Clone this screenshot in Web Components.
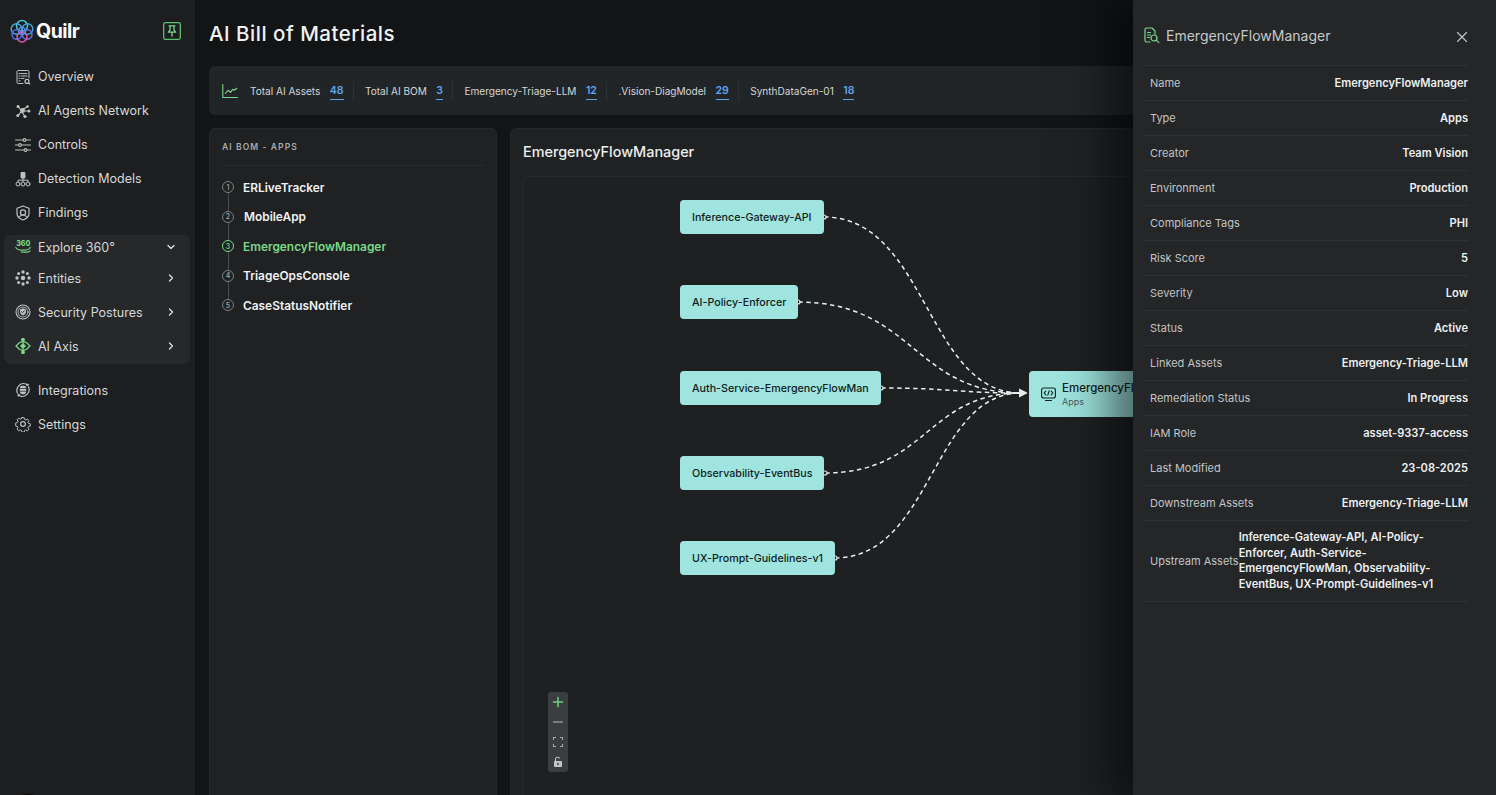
<!DOCTYPE html>
<html lang="en"><head><meta charset="utf-8"><title>AI Bill of Materials</title>
<style>
html,body{margin:0;height:795px;overflow:hidden;background:#121416;font-family:Inter,"Liberation Sans",sans-serif;color:#e6e8e8}
q-app{height:795px}
</style></head><body>
<q-app>
  <q-sidebar>
    <q-nav-item label="Overview" icon="overview"></q-nav-item>
    <q-nav-item label="AI Agents Network" icon="agents"></q-nav-item>
    <q-nav-item label="Controls" icon="controls"></q-nav-item>
    <q-nav-item label="Detection Models" icon="models"></q-nav-item>
    <q-nav-item label="Findings" icon="findings"></q-nav-item>
    <q-nav-group>
      <q-nav-item label="Explore 360°" icon="explore" chevron="down" short></q-nav-item>
      <q-nav-item label="Entities" icon="entities" chevron="right"></q-nav-item>
      <q-nav-item label="Security Postures" icon="security" chevron="right"></q-nav-item>
      <q-nav-item label="AI Axis" icon="axis" chevron="right"></q-nav-item>
    </q-nav-group>
    <q-nav-item label="Integrations" icon="integrations"></q-nav-item>
    <q-nav-item label="Settings" icon="settings"></q-nav-item>
  </q-sidebar>
  <q-main>
    <q-stat-bar>
      <q-stat label="Total AI Assets" value="48"></q-stat>
      <q-stat label="Total AI BOM" value="3"></q-stat>
      <q-stat label="Emergency-Triage-LLM" value="12"></q-stat>
      <q-stat label=".Vision-DiagModel" value="29"></q-stat>
      <q-stat label="SynthDataGen-01" value="18" last></q-stat>
    </q-stat-bar>
    <q-bom-list slot="left">
      <q-bom-item n="1">ERLiveTracker</q-bom-item>
      <q-bom-item n="2" nudge>MobileApp</q-bom-item>
      <q-bom-item n="3" active>EmergencyFlowManager</q-bom-item>
      <q-bom-item n="4">TriageOpsConsole</q-bom-item>
      <q-bom-item n="5" last>CaseStatusNotifier</q-bom-item>
    </q-bom-list>
    <q-flow slot="right" heading="EmergencyFlowManager">
      <q-flow-node x="680" y="200">Inference-Gateway-API</q-flow-node>
      <q-flow-node x="680" y="285">AI-Policy-Enforcer</q-flow-node>
      <q-flow-node x="680" y="371">Auth-Service-EmergencyFlowMan</q-flow-node>
      <q-flow-node x="680" y="456">Observability-EventBus</q-flow-node>
      <q-flow-node x="680" y="541">UX-Prompt-Guidelines-v1</q-flow-node>
      <q-flow-target x="1029" y="371" name="EmergencyFlowManager" kind="Apps"></q-flow-target>
    </q-flow>
  </q-main>
  <q-detail-panel heading="EmergencyFlowManager">
    <q-detail-row label="Name">EmergencyFlowManager</q-detail-row>
    <q-detail-row label="Type">Apps</q-detail-row>
    <q-detail-row label="Creator">Team Vision</q-detail-row>
    <q-detail-row label="Environment">Production</q-detail-row>
    <q-detail-row label="Compliance Tags">PHI</q-detail-row>
    <q-detail-row label="Risk Score">5</q-detail-row>
    <q-detail-row label="Severity">Low</q-detail-row>
    <q-detail-row label="Status">Active</q-detail-row>
    <q-detail-row label="Linked Assets">Emergency-Triage-LLM</q-detail-row>
    <q-detail-row label="Remediation Status">In Progress</q-detail-row>
    <q-detail-row label="IAM Role">asset-9337-access</q-detail-row>
    <q-detail-row label="Last Modified">23-08-2025</q-detail-row>
    <q-detail-row label="Downstream Assets">Emergency-Triage-LLM</q-detail-row>
    <q-detail-row label="Upstream Assets" multi>Inference-Gateway-API, AI-Policy-Enforcer, Auth-Service-EmergencyFlowMan, Observability-EventBus, UX-Prompt-Guidelines-v1</q-detail-row>
  </q-detail-panel>
</q-app>
<script>
const G='#7bd88a', S='#bfc2c2';
const svg=(b,w=16,h=16,vb='0 0 16 16')=>`<svg width="${w}" height="${h}" viewBox="${vb}" fill="none" stroke="${S}" stroke-width="1" stroke-linecap="round" stroke-linejoin="round">${b}</svg>`;
const ICONS={
overview:svg(`<path d="M8 14.5H3.2a1.2 1.2 0 0 1-1.2-1.2V2.7a1.2 1.2 0 0 1 1.2-1.2h9.6A1.2 1.2 0 0 1 14 2.7V9"/><path d="M4 4.6h8M4 7h1M6.5 7h5.5M4 9.4h1M6.5 9.4h2.5M4 11.8h1"/><circle cx="12" cy="12.4" r="2" stroke-width="1.2"/><path d="M13.5 13.9l1.3 1.2" stroke-width="1.2"/>`),
agents:svg(`<path d="M3 3l3.5 5L3 13M6.5 8h6M8 5.5l-1.5 2.5L9.5 13M12.5 3.5L9 6" stroke-width="1.2"/><g fill="${S}" stroke="none"><circle cx="7.500" cy="7.500" r="2.400"/><circle cx="3" cy="3.500" r="1.500"/><circle cx="2.800" cy="12.500" r="1.500"/><circle cx="12.500" cy="3.500" r="1.300"/><circle cx="14" cy="8" r="1.500"/><circle cx="10" cy="13.500" r="1.600"/></g>`),
controls:svg(`<path d="M.5 3h15M.5 8h15M.5 13h15" stroke-width="1.100"/><g fill="#1c1e1f" stroke-width="1.100"><circle cx="9.500" cy="3" r="1.400"/><circle cx="5" cy="8" r="1.400"/><circle cx="10.500" cy="13" r="1.400"/></g>`),
models:svg(`<rect x="5.600" y="1" width="4.800" height="6.400" rx="1" fill="${S}" stroke="none"/><path d="M8 7.500v3M3 11V9.200h10V11"/><circle cx="3" cy="13" r="2"/><circle cx="8" cy="13" r="2"/><circle cx="13" cy="13" r="2"/>`),
findings:svg(`<path d="M8 1l6 2.200v5c0 3.200-2.600 5.600-6 6.800-3.400-1.200-6-3.600-6-6.800v-5z" stroke-width="1.200"/><circle cx="8" cy="7.500" r="2.600" stroke-width="1.200"/><path d="M4.700 11.600c.8-1.200 2-1.600 3.300-1.600s2.500.4 3.300 1.600" stroke-width="1.200"/>`),
explore:`<svg width="16" height="16" viewBox="0 0 16 16" fill="none"><text x="1.200" y="6.600" font-family="Inter,'Liberation Sans',sans-serif" font-size="7" font-weight="800" fill="${G}" stroke="none">360</text><path d="M.8 8.400c.4 1.800 3.400 2.700 7.200 2.700s6.800-.9 7.200-2.700M8.500 13.100H12c1.500 0 2.600-.5 3.200-1.200" stroke="${G}" stroke-width="1.100" stroke-linecap="round"/><path d="M7.500 11.500l-2 1.400 2 1.400z" fill="${G}"/></svg>`,
entities:svg(`<g fill="${S}" stroke="none"><circle cx="8" cy="8" r="2.200"/><circle cx="8" cy="2" r="1.700"/><circle cx="8" cy="14" r="1.700"/><circle cx="2" cy="8" r="1.700"/><circle cx="14" cy="8" r="1.700"/><circle cx="3.600" cy="3.600" r="1.500"/><circle cx="12.400" cy="3.600" r="1.500"/><circle cx="3.600" cy="12.400" r="1.500"/><circle cx="12.400" cy="12.400" r="1.500"/></g>`),
security:svg(`<circle cx="8" cy="8" r="7" stroke-width="1.100"/><circle cx="8" cy="8" r="5" stroke-width=".9"/><path d="M8 4.300l3 1.100v2.400c0 1.700-1.300 3-3 3.700-1.700-.7-3-2-3-3.700V5.400z" fill="${S}" stroke="none"/><path d="M6.600 7.700l1 1 1.800-1.900" stroke="#262829"/>`),
axis:`<svg width="16" height="16" viewBox="0 0 16 16" fill="none" stroke="${G}" stroke-width="1.200" stroke-linecap="round" stroke-linejoin="round"><path d="M4.400 4.800L1 8l3.400 3.200M11.600 4.800L15 8l-3.400 3.200M5 4.500c1.800-1 4.200-1 6 0M5 11.500c1.800 1 4.200 1 6 0"/><path d="M8 2.500V13.500"/><circle cx="8" cy="1.700" r="1.300" fill="${G}"/><circle cx="8" cy="14.300" r="1.300" fill="${G}"/><path d="M5.800 8L8 5.800 10.200 8 8 10.200z" fill="${G}"/></svg>`,
integrations:svg(`<path d="M2.500 11.200A6.800 6.800 0 0 1 11 2M13.500 4.800A6.800 6.800 0 0 1 5 14" stroke-width="1.200"/><rect x="4.800" y="3.800" width="6.400" height="8.400" rx="2.400" fill="${S}" stroke="none"/><path d="M4.800 6.500h6.400M4.800 9.300h6.400" stroke="#1c1e1f" stroke-width=".7"/><circle cx="12.300" cy="2.800" r=".9" fill="${S}"/><circle cx="3.700" cy="13.200" r=".9" fill="${S}"/>`),
settings:svg(`<circle cx="8" cy="8" r="2.400" stroke-width="1.200"/><path d="M6.700.9h2.600l.4 2 1.300.6 1.800-1.100 1.800 1.800-1.100 1.800.6 1.300 2 .4v2.600l-2 .4-.6 1.300 1.100 1.800-1.800 1.800-1.800-1.100-1.300.6-.4 2H6.700l-.4-2-1.300-.6-1.800 1.100-1.800-1.800 1.100-1.800-.6-1.300-2-.4V6.800l2-.4.6-1.300-1.100-1.800 1.800-1.800L5 2.600l1.300-.6z" stroke-width="1.100" transform="translate(.8 .8) scale(.9)"/>`)
};
const def=(name,render,init)=>customElements.define(name,class extends HTMLElement{
  connectedCallback(){ if(this.shadowRoot) return; const r=this.attachShadow({mode:'open'}); r.innerHTML=render(this); if(init) init(this,r); }
});
def('q-app',()=>`<style>:host{display:flex;position:relative;overflow:hidden;width:1496px}</style><slot></slot>`);
def('q-sidebar',()=>`<style>
:host{display:block;flex:none;width:195px;height:795px;box-sizing:border-box;background:#1c1e1f;padding:0 5px 0 4px;position:relative;overflow:hidden}
.brand{display:flex;align-items:center;height:59.500px;padding:3px 0 0 6px;box-sizing:border-box}
.word{font-size:19.500px;font-weight:700;letter-spacing:-.5px;color:#fff;margin-left:2px;line-height:1;flex:1}
.pin{margin-right:9px;display:flex}
.avatar{position:absolute;left:21px;bottom:-5px;width:14px;height:6px;border-radius:50%;background:#050505}
</style>
<div class="brand">
<svg width="24" height="24" viewBox="0 0 24 24" fill="none" stroke-width="1.500"><circle cx="12" cy="7" r="5.500" stroke="#48c8d0"/><circle cx="6.500" cy="10" r="5.300" stroke="#48a8e0"/><circle cx="17.500" cy="10" r="5.300" stroke="#3fa4dc"/><circle cx="6.800" cy="15.500" r="4.800" stroke="#4a70e0"/><circle cx="17.200" cy="15.500" r="4.800" stroke="#6a70e0"/><circle cx="12" cy="18" r="5" stroke="#d85cb4"/><circle cx="12" cy="12" r="3.500" stroke="#5a8ae0"/></svg>
<span class="word">Quilr</span>
<span class="pin"><svg width="18" height="18" viewBox="0 0 18 18" fill="none" stroke="${G}" stroke-width="1.300" stroke-linecap="round" stroke-linejoin="round"><rect x=".7" y=".7" width="16.600" height="16.600" rx="1.500" stroke="#5cc06c"/><path d="M6 3.800h6M7 3.800v4.400L5.300 10.200h7.400L11 8.200V3.800M9 10.200v4"/></svg></span>
</div><slot></slot><div class="avatar"></div>`);
def('q-nav-group',()=>`<style>:host{display:block;background:#262829;border-radius:6px;margin:5.500px 0 9px;padding:0 0 1px;height:128px;overflow:hidden}</style><slot></slot>`);
def('q-nav-item',h=>{
  const c=h.getAttribute('chevron');
  const ch=c?`<svg class="c" width="10" height="10" viewBox="0 0 10 10" fill="none" stroke="#dfe1e1" stroke-width="1.300" stroke-linecap="round" stroke-linejoin="round"><path d="${c==='down'?'M2 3.500l3 3 3-3':'M3.500 2l3 3-3 3'}"/></svg>`:'';
  return `<style>
:host{display:flex;align-items:center;height:${h.hasAttribute('short')?'26px':'34px'};padding:${h.hasAttribute('short')?'0 14px 2px 11px':'0 14px 0 11px'};box-sizing:border-box;font-size:12.500px;color:#d6d8d8;white-space:nowrap}
.i{width:16px;height:16px;display:flex;margin-right:7px}
.l{flex:1}
.c{flex:none}
</style><span class="i">${ICONS[h.getAttribute('icon')]}</span><span class="l">${h.getAttribute('label')}</span>${ch}`;
});
def('q-main',()=>`<style>
:host{display:flex;flex-direction:column;flex:1;min-width:0;height:795px;padding:0 14px;box-sizing:border-box;overflow:hidden}
h1{margin:0;height:66px;display:flex;align-items:center;font-size:20.500px;font-weight:500;letter-spacing:.5px;color:#f0f2f2}
.cols{display:flex;gap:13px;margin-top:13px;flex:1;min-height:0}
.cols ::slotted([slot=left]){flex:none;width:288px}
.cols ::slotted([slot=right]){flex:1;min-width:0}
</style><h1>AI Bill of Materials</h1><slot></slot><div class="cols"><slot name="left"></slot><slot name="right"></slot></div>`);
def('q-stat-bar',()=>`<style>
:host{display:flex;align-items:center;height:49px;flex:none;box-sizing:border-box;background:#212528;border-radius:6px;padding-left:13px}
.i{display:flex;margin-right:12px}
</style><span class="i"><svg width="16" height="16" viewBox="0 0 16 16" fill="none" stroke="${G}" stroke-width="1.100" stroke-linecap="round" stroke-linejoin="round"><path d="M.8 1.500v13h14.700"/><path d="M3.300 10.500L6 7.300l2.500 2 2.300-3 1.500 1 2.500-2"/></svg></span><slot></slot>`);
def('q-stat',h=>`<style>
:host{display:flex;align-items:center;font-size:10.050px;color:#d4d6d6;white-space:nowrap;height:20px;padding-right:${h.hasAttribute('last')?0:'9px'};margin-right:11.500px;border-right:${h.hasAttribute('last')?'none':'1px solid #2d3134'}}
b{margin-left:9.500px;font-weight:600;font-size:10.500px;color:#5ea6ec;border-bottom:1px solid #5ea6ec;padding:0 0 2px;line-height:13px;position:relative;top:1px}
</style>${h.getAttribute('label')}<b>${h.getAttribute('value')}</b>`);
def('q-bom-list',()=>`<style>
:host{display:block;background:#1f2123;border:1px solid #25282a;border-radius:6px 6px 0 0;box-sizing:border-box;padding:0 12px;height:700px}
.h{height:37px;padding-bottom:1px;box-sizing:border-box;display:flex;align-items:center;font-size:8.500px;font-weight:600;letter-spacing:1.100px;color:#a9abab;border-bottom:1px solid #2a2d2f}
.b{padding-top:6.500px}
</style><div class="h">AI BOM - APPS</div><div class="b"><slot></slot></div>`);
def('q-bom-item',h=>{
  const a=h.hasAttribute('active');
  return `<style>
:host{display:flex;align-items:center;height:29.500px;position:relative;font-size:11.900px;font-weight:600;color:${a?G:'#f0f2f2'};white-space:nowrap}
.n{width:12px;height:12px;box-sizing:border-box;border:1px solid ${a?G:'#7b7e7e'};border-radius:50%;font-size:7px;font-weight:500;display:flex;align-items:center;justify-content:center;color:${a?G:'#a5a8a8'};margin-right:${h.hasAttribute('nudge')?'10px':'9px'};background:#1f2123;position:relative;z-index:1}
.line{position:absolute;left:5.500px;top:20px;height:20px;width:1px;background:#4a4d4e}
</style>${h.hasAttribute('last')?'':'<span class="line"></span>'}<span class="n">${h.getAttribute('n')}</span><slot></slot>`;
});
const EDGE=[[824,217],[798,302],[881,388],[825,473],[835,558]];
const TX=1029,TY=393;
def('q-flow',h=>{
  const paths=EDGE.map(([x,y])=>{const m=(x+TX)/2;return `<path d="M${x} ${y}C${m} ${y} ${m} ${TY} ${TX-8} ${TY}"/>`}).join('');
  const dots=EDGE.map(([x,y])=>`<circle cx="${x}" cy="${y}" r="2" fill="#1e2022" stroke="#e6e8e8" stroke-width="1.200"/>`).join('');
  return `<style>
:host{display:flex;flex-direction:column;background:#1f2123;border:1px solid #25282a;border-radius:6px 6px 0 0;box-sizing:border-box;padding:0 12px;height:700px}
h2{margin:0;height:47px;padding-bottom:2px;box-sizing:border-box;flex:none;display:flex;align-items:center;font-size:14.400px;font-weight:500;color:#eceeee}
.canvas{flex:1;position:relative;border:1px solid #272a2c;border-radius:6px;background:#1e2022;overflow:hidden}
svg.e{position:absolute;left:0;top:0;width:100%;height:100%;pointer-events:none}
.ctl{position:absolute;left:24px;top:515px;width:20px;height:80px;background:#3b3e40;border-radius:3px;display:grid;grid-template-rows:repeat(4,20px);justify-items:center;align-items:center}
</style><h2>${h.getAttribute('heading')}</h2><div class="canvas"><slot></slot>
<svg class="e" fill="none"><g transform="translate(-524 -177)"><g stroke="#eceeee" stroke-width="1.500" stroke-dasharray="4.500 3.500" >${paths}</g>${dots}<path d="M1012 393h9" stroke="#e8eaea" stroke-width="1.500"/><path d="M1019 388.500l9 4.500-9 4.500z" fill="#e8eaea"/><circle cx="1029" cy="393" r="2" fill="#3a1a22"/></g></svg>
<div class="ctl">
<svg width="12" height="12" viewBox="0 0 12 12" stroke="#6fd07f" stroke-width="1.500" stroke-linecap="round"><path d="M6 1.500v9M1.500 6h9"/></svg>
<svg width="12" height="12" viewBox="0 0 12 12" stroke="#8f9292" stroke-width="1.300" stroke-linecap="round"><path d="M1.500 6h9"/></svg>
<svg width="12" height="12" viewBox="0 0 12 12" fill="none" stroke="#a4a7a7" stroke-width="1.100"><path d="M1.500 4V1.500H4M8 1.500h2.500V4M10.500 8v2.500H8M4 10.500H1.500V8"/></svg>
<svg width="12" height="12" viewBox="0 0 12 12" fill="none"><path d="M3.500 5V3.500a2.200 2.200 0 0 1 4.200-1" stroke="#c4c6c6" stroke-width="1.100"/><rect x="2" y="5" width="8" height="6" rx=".8" fill="#c4c6c6"/><circle cx="6" cy="8" r="1" fill="#3b3e40"/></svg>
</div></div>`;
});
const place=(h)=>{h.style.left=(h.getAttribute('x')-524)+'px';h.style.top=(h.getAttribute('y')-177)+'px';};
def('q-flow-node',()=>`<style>
:host{position:absolute;display:flex;align-items:center;height:34px;box-sizing:border-box;padding:0 12px;background:#9fe4df;border-radius:4px;color:#0f1c1c;font-size:10.700px;font-weight:500;white-space:nowrap;z-index:1}
</style><slot></slot>`,place);
def('q-flow-target',h=>`<style>
:host{position:absolute;display:flex;align-items:center;height:46px;width:220px;box-sizing:border-box;padding:1px 12px 0;background:#9fe4df;border-radius:4px;color:#0f1c1c;white-space:nowrap;z-index:1}
svg{margin-right:6px;flex:none}
.t{display:flex;flex-direction:column;line-height:14px}
.n{font-size:11.500px;font-weight:500}.k{font-size:9px;color:#48605f}
</style><svg width="15" height="15" viewBox="0 0 15 15" fill="none" stroke="#10201f" stroke-width="1.100" stroke-linecap="round" stroke-linejoin="round"><rect x=".6" y="1" width="13.800" height="10" rx="2"/><path d="M4.800 4.200L3.200 6l1.600 1.800M10.200 4.200L11.800 6l-1.600 1.800M8.200 3.800L6.800 8.200M4.500 13.500h6"/></svg><div class="t"><span class="n">${h.getAttribute('name')}</span><span class="k">${h.getAttribute('kind')}</span></div>`,place);
def('q-detail-panel',h=>`<style>
:host{position:absolute;right:0;top:0;width:363px;height:795px;box-sizing:border-box;background:#242628;padding:0 28px 0 11px;box-shadow:-12px 0 45px 12px rgba(0,0,0,.55);z-index:5}
.h{height:65px;display:flex;align-items:center;color:#c6c9c9;font-size:14px;position:relative}
.h span{margin-left:6px;position:relative;top:3px}
.h svg.f{position:relative;top:3px}
.x{position:absolute;right:0;top:31px}
.list{border-bottom:1px solid #2f3234}
</style><div class="h"><svg class="f" width="16" height="17" viewBox="0 0 16 17" fill="none" stroke="${G}" stroke-width="1.200" stroke-linecap="round" stroke-linejoin="round"><path d="M6 15H2.500A1.500 1.500 0 0 1 1 13.500v-11A1.500 1.500 0 0 1 2.500 1H8l3 3v3"/><path d="M3.500 5.500h3M3.500 8h3M3.500 10.500h2"/><circle cx="10" cy="11" r="3"/><path d="M12.300 13.200l2.500 2.500"/></svg><span>${h.getAttribute('heading')}</span>
<svg class="x" width="12" height="12" viewBox="0 0 12 12" stroke="#c6c9c9" stroke-width="1.100" stroke-linecap="round"><path d="M1.500 1.500l9 9M10.500 1.500l-9 9"/></svg></div><div class="list"><slot></slot></div>`);
def('q-detail-row',h=>{
  const m=h.hasAttribute('multi');
  return `<style>
:host{display:flex;align-items:center;justify-content:${m?'flex-start':'space-between'};height:${m?'81px':'35px'};box-sizing:border-box;border-top:1px solid #2f3234;padding-left:6px;font-size:11px;white-space:${m?'normal':'nowrap'}}
.l{color:#c2c5c5;flex:none}
.v{font-weight:600;color:#eef0f0;font-size:11.100px;${m?'width:205px;line-height:15.500px':''}}
</style><span class="l">${h.getAttribute('label')}</span><span class="v"><slot></slot></span>`;
});
</script>
</body></html>
